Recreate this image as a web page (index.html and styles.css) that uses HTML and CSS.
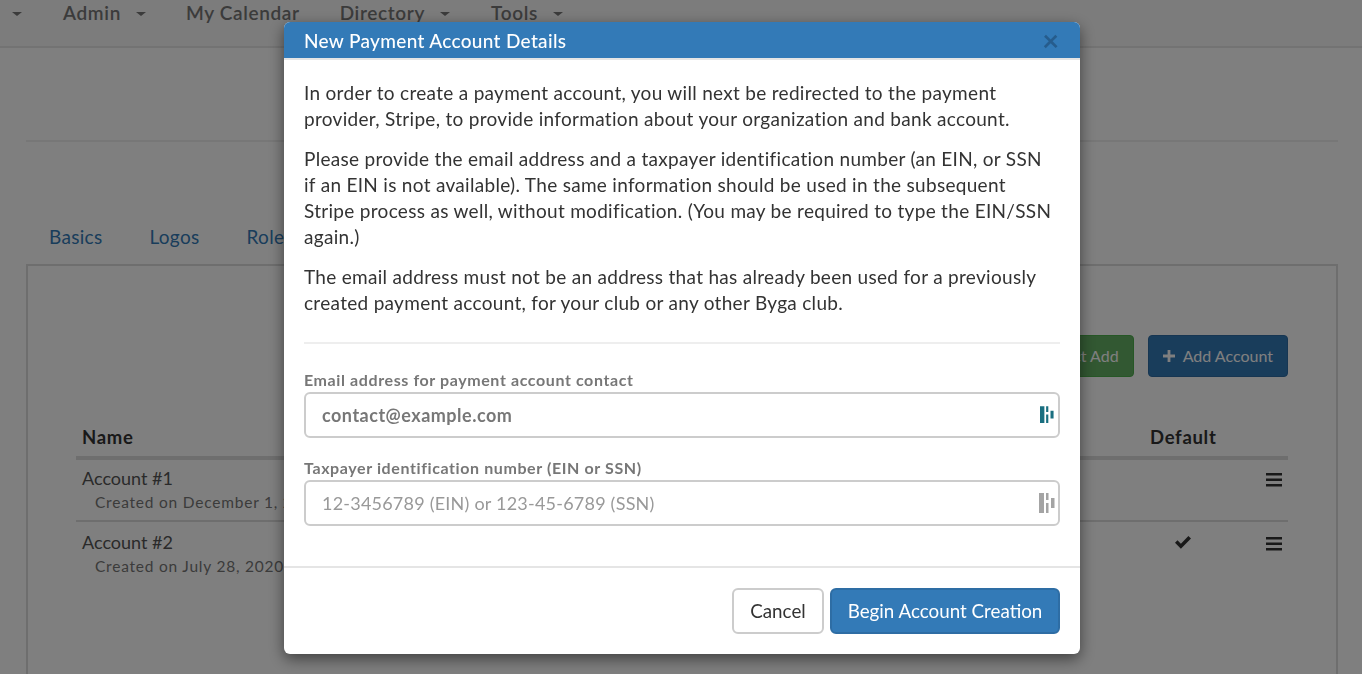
FILE: index.html
```html
<!DOCTYPE html>
<html lang="en">
<head>
<meta charset="utf-8">
<title>New Payment Account Details</title>
<link rel="stylesheet" href="styles.css">
</head>
<body>
<div class="page">
  <nav class="nav">
    <span class="nav-item nav-first"><i class="caret"></i></span>
    <span class="nav-item nav-admin">Admin<i class="caret"></i></span>
    <span class="nav-item nav-cal">My Calendar</span>
    <span class="nav-item nav-dir">Directory<i class="caret"></i></span>
    <span class="nav-item">Tools<i class="caret"></i></span>
  </nav>
  <main class="content">
    <div class="rule"></div>
    <ul class="tabs">
      <li class="tab">Basics</li>
      <li class="tab">Logos</li>
      <li class="tab">Roles</li>
    </ul>
    <section class="panel">
      <div class="actions">
        <span class="btn btn-green">Direct Add</span>
        <span class="btn btn-navy"><svg class="plus" viewBox="0 0 12 12" width="12" height="12"><path d="M4.6 0h2.8v4.6H12v2.8H7.4V12H4.6V7.4H0V4.6h4.6z"/></svg>Add Account</span>
      </div>
      <table class="table">
        <thead>
          <tr><th class="c-name">Name</th><th></th><th class="c-def">Default</th><th class="c-menu"></th></tr>
        </thead>
        <tbody>
          <tr class="row-first">
            <td class="c-name">Account #1<div class="sub">Created on December 1, 2019</div></td>
            <td></td><td class="c-def"></td>
            <td class="c-menu"><svg class="burger" viewBox="0 0 16 14" width="16" height="14"><path d="M0 0h16v2.6H0zM0 5.5h16v2.6H0zM0 11h16v2.6H0z"/></svg></td>
          </tr>
          <tr class="row-second">
            <td class="c-name">Account #2<div class="sub">Created on July 28, 2020</div></td>
            <td></td>
            <td class="c-def"><svg class="check" viewBox="0 0 16 13" width="16" height="13"><path d="M0 6.8 2.5 4.3l3.4 3.4L13.400 0 16 2.500 5.900 12.800z"/></svg></td>
            <td class="c-menu"><svg class="burger" viewBox="0 0 16 14" width="16" height="14"><path d="M0 0h16v2.6H0zM0 5.5h16v2.6H0zM0 11h16v2.6H0z"/></svg></td>
          </tr>
        </tbody>
      </table>
    </section>
  </main>
</div>
<div class="backdrop"></div>
<div class="modal" role="dialog">
  <header class="modal-head">
    <h4 class="modal-title">New Payment Account Details</h4>
    <span class="close">×</span>
  </header>
  <div class="modal-body">
    <p>In order to create a payment account, you will next be redirected to the payment provider, Stripe, to provide information about your organization and bank account.</p>
    <p>Please provide the email address and a taxpayer identification number (an EIN, or SSN if an EIN is not available). The same information should be used in the subsequent Stripe process as well, without modification. (You may be required to type the EIN/SSN again.)</p>
    <p>The email address must not be an address that has already been used for a previously created payment account, for your club or any other Byga club.</p>
    <hr class="divider">
    <label class="label">Email address for payment account contact</label>
    <div class="field">
      <input class="input input-filled" type="text" value="contact@example.com">
      <svg class="dash dash-on" viewBox="0 0 16 20" width="16" height="20"><path d="M0 0h5v19H0zM7 0h2.500v6.500H7zM7 9.500h2.500V19H7zM12 5h3.500v9H12z"/></svg>
    </div>
    <label class="label">Taxpayer identification number (EIN or SSN)</label>
    <div class="field">
      <input class="input" type="text" placeholder="12-3456789 (EIN) or 123-45-6789 (SSN)">
      <svg class="dash dash-off" viewBox="0 0 16 20" width="16" height="20"><path d="M0 0h5v20H0zM7 0h2.500v7H7zM7 10h2.500v10H7zM12 5h3.500v10H12z"/></svg>
    </div>
  </div>
  <footer class="modal-foot">
    <button class="mbtn mbtn-default" type="button">Cancel</button>
    <button class="mbtn mbtn-primary" type="button">Begin Account Creation</button>
  </footer>
</div>
</body>
</html>
```
FILE: styles.css
```css
* { box-sizing: border-box; }
html, body { margin: 0; height: 674px; overflow: hidden; }
body { font-family: Lato, "Open Sans", sans-serif; font-size: 18px; color: #333; background: #fff; }

.page { height: 674px; overflow: hidden; }

.nav {
  display: flex;
  height: 48px;
  padding: 0 0 0 12px;
  background: #f8f8f8;
  border-bottom: 2px solid #e7e7e7;
  font-size: 19px;
  font-weight: 600;
  letter-spacing: .65px;
  line-height: 26px;
  color: #777;
}
.nav-item { display: inline-flex; align-items: center; height: 26px; white-space: nowrap; margin-right: 40px; }
.nav-first { margin-right: 41px; }
.nav-cal { margin-right: 40px; }
.nav-dir { margin-right: 41px; }
.caret {
  display: inline-block;
  width: 0; height: 0;
  margin-left: 15px;
  margin-top: 2px;
  border-top: 4px solid #777;
  border-left: 5.500px solid transparent;
  border-right: 5.500px solid transparent;
}
.nav-first .caret { margin-left: 0; }

.content { padding: 0 24px 0 26px; }
.rule { height: 2px; background: #eee; margin-top: 92px; }
.tabs { display: flex; list-style: none; margin: 0; padding: 0 0 0 23px; height: 122px; align-items: flex-end; gap: 47px; color: #337ab7; line-height: 26px; font-size: 19px; letter-spacing: .3px; }
.tab { padding-bottom: 14px; }
.panel { height: 500px; border: 2px solid #ddd; padding: 69px 48px 0 48px; }
.actions { display: flex; justify-content: flex-end; gap: 14px; }
.btn { display: inline-flex; align-items: center; height: 42px; padding: 0 14px 1px; border-radius: 4px; color: #fff; font-size: 16px; }
.btn-green { background: #64b064; border: 1px solid #4cae4c; }
.btn-navy { background: #337ab7; border: 1px solid #2e6da4; }
.plus { fill: #fff; margin-right: 8px; }
.table { width: 100%; border-collapse: collapse; margin-top: 47px; font-size: 18px; }
.table th { text-align: left; font-weight: 700; padding: 0 6px 6px; font-size: 18.500px; letter-spacing: .7px; line-height: 26px; border-bottom: 4px solid #ddd; }
.table td { padding: 5px 6px 7px; vertical-align: top; border-bottom: 2px solid #ddd; line-height: 26px; color: #555; }
.table .row-second td { border-bottom: 0; padding-top: 7px; }
.sub { font-size: 15.500px; padding-left: 13px; line-height: 22px; letter-spacing: .78px; color: #777; }
.c-name { width: 600px; }
.table .c-def { width: 114px; text-align: left; padding-left: 6px; }
.check { margin-left: 25px; margin-top: 6px; fill: #333; }
.table .c-menu { width: 30px; padding: 0 6px; }
.table .row-second .c-menu { padding-top: 2px; }
.burger { fill: #333; display: block; margin: 13px 0 0 auto; }

.backdrop { position: fixed; inset: 0; background: rgba(0, 0, 0, .5); }

.modal {
  position: fixed;
  left: 284px;
  top: 22px;
  width: 796px;
  height: 632px;
  background: #fff;
  border-radius: 6px;
  box-shadow: 0 5px 15px rgba(0, 0, 0, .5);
  overflow: hidden;
  display: flex;
  flex-direction: column;
}
.modal-head {
  display: flex;
  align-items: center;
  justify-content: space-between;
  height: 38px;
  padding: 1px 20px 0;
  background: #337ab7;
  border-bottom: 2px solid #e5e5e5;
  color: #fff;
}
.modal-title { margin: 0; font-size: 19px; letter-spacing: .33px; font-weight: 500; line-height: 36px; }
.close { font-size: 29px; font-weight: 700; line-height: 36px; margin-top: -2px; color: #21517b; opacity: .7; margin-right: 1px; }

.modal-body { flex: 1; padding: 20px 20px 0; font-size: 19px; letter-spacing: .3px; line-height: 26px; }
.modal-body p { margin: 0 0 14px; padding-right: 4px; }
.divider { border: 0; border-top: 2px solid #eee; margin: 26px 0 0; }
.label { display: block; margin-top: 19px; font-size: 16px; letter-spacing: .6px; font-weight: 700; line-height: 22px; color: #777; }
.divider + .label { margin-top: 25px; }
.field { position: relative; margin-top: 1px; }
.input {
  display: block;
  width: 100%;
  height: 46px;
  padding: 0 40px 0 16px;
  border: 2px solid #ccc;
  border-radius: 6px;
  background: #fff;
  font-family: inherit;
  font-size: 18px;
  letter-spacing: .22px;
  color: #555;
  outline: none;
}
.input::placeholder { color: #999; opacity: 1; }
.input-filled { color: #777; font-weight: 700; letter-spacing: .5px; }
.dash { position: absolute; top: 14px; right: 5px; }
.dash-on { fill: #1a6f80; width: 14px; height: 18px; right: 6px; }
.dash-off { fill: #a4a4a4; top: 13px; }

.modal-foot {
  display: flex;
  justify-content: flex-end;
  gap: 6px;
  height: 88px;
  padding: 20px;
  border-top: 2px solid #e5e5e5;
}
.mbtn {
  height: 46px;
  border-radius: 6px;
  font-family: inherit;
  font-size: 18.800px;
  line-height: 26px;
  padding: 0;
  white-space: nowrap;
}
.mbtn-default { background: #fff; border: 2px solid #ccc; color: #333; width: 92px; }
.mbtn-primary { background: #337ab7; border: 2px solid #2e6da4; color: #fff; width: 230px; }
```
